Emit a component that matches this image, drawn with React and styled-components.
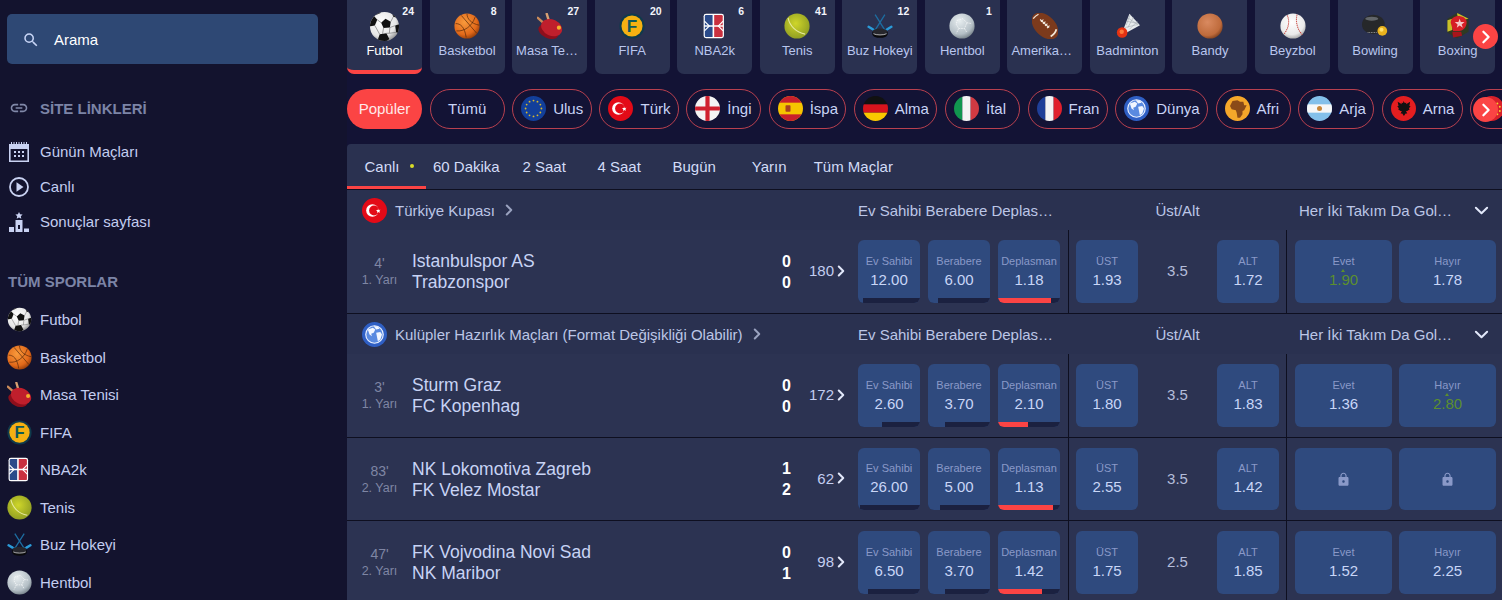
import styled, { createGlobalStyle } from "styled-components";
import { MdSearch, MdLink, MdLock } from "react-icons/md";

const GlobalStyle = createGlobalStyle`
  html, body {
    margin: 0;
    padding: 0;
    background: #13132e;
    font-family: "Liberation Sans", Arial, sans-serif;
  }
`;

const Page = styled.div`
  display: flex;
  width: 1502px;
  height: 600px;
  overflow: hidden;
  background: #13132e;
`;

const Sidebar = styled.aside`
  flex: 0 0 347px;
  display: flex;
  flex-direction: column;
`;

const Search = styled.div`
  flex: none;
  display: flex;
  align-items: center;
  gap: 14px;
  width: 311px;
  height: 50px;
  box-sizing: border-box;
  margin: 14px 0 0 7px;
  padding: 1px 0 0 15px;
  border-radius: 5px;
  background: #2e4874;
  color: #ffffff;
  font-size: 15px;
`;

const SectionTitle = styled.div`
  flex: none;
  display: flex;
  align-items: center;
  gap: 11px;
  padding-left: ${(p) => (p.$flush ? "8px" : "9px")};
  height: 20px;
  color: #7c84a6;
  font-size: 15px;
  font-weight: bold;
  margin-top: ${(p) => p.$top}px;
`;

const LinkList = styled.div`
  flex: none;
  display: flex;
  flex-direction: column;
  margin-top: 16px;
`;

const SideLink = styled.div`
  display: flex;
  align-items: center;
  gap: 11px;
  height: 35px;
  padding-left: 9px;
  color: #c3cdf0;
  font-size: 15px;
`;

const SportList = styled.div`
  flex: none;
  display: flex;
  flex-direction: column;
  margin-top: 10px;
`;

const SportLink = styled.div`
  display: flex;
  align-items: center;
  gap: 8px;
  height: 37.5px;
  flex: none;
  padding-left: 7px;
  color: #c3cdf0;
  font-size: 15px;
`;

const Main = styled.main`
  flex: 1;
  min-width: 0;
  display: flex;
  flex-direction: column;
  background: #131335;
  position: relative;
  overflow: hidden;
`;

const SportRow = styled.div`
  display: flex;
  gap: 7.55px;
  height: 74px;
  flex: none;
`;

const SportTab = styled.div`
  position: relative;
  flex: 0 0 75px;
  box-sizing: border-box;
  display: flex;
  flex-direction: column;
  align-items: center;
  height: 74px;
  padding-top: 13px;
  border-radius: 0 0 7px 7px;
  background: #2a3150;
  border-bottom: ${(p) => (p.$active ? "4px solid #fb4444" : "0")};
  color: ${(p) => (p.$active ? "#ffffff" : "#b9c6ee")};
  font-size: 13px;
`;

const SportIconBox = styled.div`
  display: flex;
  align-items: center;
  justify-content: center;
  height: 26px;
`;

const SportLabel = styled.div`
  width: 67px;
  margin-top: 4px;
  line-height: 16px;
  text-align: center;
  white-space: nowrap;
  overflow: hidden;
  text-overflow: ellipsis;
`;

const SportCount = styled.span`
  position: absolute;
  top: 5px;
  right: 8px;
  color: #f2f4fb;
  font-size: 10.5px;
  font-weight: bold;
  line-height: 12px;
`;

const NextButton = styled.div`
  position: absolute;
  right: 4px;
  top: ${(p) => p.$top}px;
  display: flex;
  align-items: center;
  justify-content: center;
  width: 25px;
  height: 25px;
  border-radius: 50%;
  background: #fb4444;
`;

const PillRow = styled.div`
  display: flex;
  gap: 7.6px;
  margin-top: 15px;
  height: 40px;
  flex: none;
`;

const Pill = styled.div`
  flex: none;
  box-sizing: border-box;
  display: flex;
  align-items: center;
  justify-content: ${(p) => (p.$plain ? "center" : "flex-start")};
  gap: 7px;
  width: ${(p) => p.$width}px;
  height: 40px;
  padding: ${(p) => (p.$plain ? "0 0 1px" : "0 8px 1px")};
  overflow: hidden;
  border-radius: 20px;
  border: ${(p) => (p.$active ? "0" : "1.5px solid #b9404f")};
  background: ${(p) => (p.$active ? "#fb4444" : "transparent")};
  color: ${(p) => (p.$active ? "#ffe9e9" : "#c9d4f5")};
  font-size: 15px;
  white-space: nowrap;
`;

const FlagSvg = styled.svg`
  flex: none;
  border-radius: 50%;
  display: block;
`;

const Board = styled.section`
  flex: none;
  margin-top: 15px;
  display: flex;
  flex-direction: column;
  border-radius: 4px 0 0 0;
  overflow: hidden;
  background: #2a3150;
`;

const TimeTabs = styled.div`
  display: flex;
  height: 45px;
  flex: none;
  border-bottom: 1px solid #0e0f20;
`;

const TimeTab = styled.div`
  box-sizing: border-box;
  display: flex;
  align-items: center;
  justify-content: center;
  gap: 10px;
  flex: none;
  width: ${(p) => (p.$active ? "79px" : "auto")};
  min-width: 75px;
  padding: 2px 7px 0 ${(p) => (p.$active ? "12px" : "7px")};
  color: #d3dcf7;
  font-size: 15px;
  border-bottom: ${(p) => (p.$active ? "3px solid #fb4444" : "3px solid transparent")};
`;

const LiveDot = styled.span`
  width: 4px;
  height: 4px;
  border-radius: 50%;
  background: #d8dc28;
`;

const LeagueHead = styled.div`
  display: flex;
  align-items: center;
  height: 40px;
  flex: none;
  background: #2a3150;
`;

const LeagueName = styled.div`
  flex: 1;
  display: flex;
  align-items: center;
  gap: 8px;
  padding-left: 15px;
  color: #bcc6e6;
  font-size: 15px;
`;

const MarketHeads = styled.div`
  flex: 0 0 644px;
  display: grid;
  grid-template-columns: 218px 223px 1fr;
  align-items: center;
  color: #bcc6e6;
  font-size: 15px;
`;

const MarketHead = styled.div`
  text-align: ${(p) => (p.$center ? "center" : "left")};
  white-space: nowrap;
  overflow: hidden;
  text-overflow: ellipsis;
  width: ${(p) => p.$width}px;
`;

const LastHead = styled.div`
  display: flex;
  align-items: center;
  justify-content: space-between;
  padding-right: 13px;
`;

const MatchRow = styled.div`
  display: flex;
  box-sizing: border-box;
  height: ${(p) => p.$height}px;
  flex: none;
  background: #2c3352;
  border-bottom: 1px solid #0e0f20;
`;

const TimeCol = styled.div`
  flex: 0 0 65px;
  box-sizing: border-box;
  display: flex;
  flex-direction: column;
  align-items: center;
  justify-content: center;
  gap: 2px;
  padding-top: 1px;
  color: #7f86a4;
  font-size: 14px;
  line-height: 15px;
`;

const HalfLabel = styled.span`
  font-size: 12.5px;
`;

const Teams = styled.div`
  flex: 1;
  display: flex;
  flex-direction: column;
  justify-content: center;
  padding-top: 1px;
  color: #c8d3f5;
  font-size: 17.5px;
  line-height: 21px;
`;

const Scores = styled.div`
  flex: 0 0 24px;
  display: flex;
  flex-direction: column;
  justify-content: center;
  color: #ffffff;
  font-size: 16px;
  font-weight: bold;
  line-height: 21px;
`;

const MoreCount = styled.div`
  flex: 0 0 52px;
  box-sizing: border-box;
  display: flex;
  align-items: center;
  justify-content: flex-end;
  gap: 1px;
  padding-right: 11px;
  padding-bottom: 2px;
  color: #c3cdf0;
  font-size: 15px;
`;

const Markets = styled.div`
  flex: 0 0 644px;
  display: flex;
`;

const MarketGroup = styled.div`
  flex: ${(p) => (p.$grow ? "1" : `0 0 ${p.$width}px`)};
  box-sizing: border-box;
  display: flex;
  gap: ${(p) => p.$gap || 8}px;
  padding: 10px ${(p) => p.$right}px 10px ${(p) => p.$left}px;
  border-right: ${(p) => (p.$grow ? "0" : "1px solid #0e0f20")};
`;

const OddButton = styled.div`
  position: relative;
  flex: ${(p) => (p.$wide ? "1" : "0 0 62px")};
  display: flex;
  flex-direction: column;
  align-items: center;
  justify-content: center;
  gap: 3px;
  overflow: hidden;
  border-radius: 6px;
  background: #2f4a7e;
`;

const OddLabel = styled.span`
  color: #8a99c8;
  font-size: 11px;
  line-height: 13px;
  white-space: nowrap;
`;

const OddValue = styled.span`
  position: relative;
  color: ${(p) => (p.$up ? "#5c8f2e" : "#c9d6f7")};
  font-size: 15px;
  line-height: 18px;
`;

const UpMark = styled.span`
  position: absolute;
  top: -2px;
  left: 50%;
  margin-left: -2px;
  border-left: 2px solid transparent;
  border-right: 2px solid transparent;
  border-bottom: 3px solid #5c8f2e;
`;

const ShareTrack = styled.div`
  position: absolute;
  left: 0;
  right: 0;
  bottom: 0;
  height: 5px;
  background: #1b2140;
`;

const ShareFill = styled.div`
  height: 100%;
  background: ${(p) => (p.$lead ? "#fb4444" : "#2f4a7e")};
`;

const LineValue = styled.div`
  flex: 1;
  display: flex;
  align-items: center;
  justify-content: center;
  padding-bottom: 2px;
  color: #b4bdda;
  font-size: 15px;
`;

function Chevron({ dir = "right", size = 14, color = "#c3cdf0", width = 2 }) {
  const d = dir === "right" ? "M5 2l6 6-6 6" : "M2 5l6 6 6-6";
  return (
    <svg width={size} height={size} viewBox="0 0 16 16" fill="none">
      <path d={d} stroke={color} strokeWidth={width * (16 / size)} strokeLinecap="round" strokeLinejoin="round" />
    </svg>
  );
}

const CalendarIcon = () => (
  <svg width="20" height="20" viewBox="0 0 20 20" fill="#c9d2f2">
    <path d="M0 2h20v18H0zm1.6 5v11.4h16.8V7z" fillRule="evenodd" />
    <path d="M2 0h1v2H2zM4.5 0h1v2h-1zM7 0h1v2H7zM9.5 0h1v2h-1zM12 0h1v2h-1zM14.5 0h1v2h-1zM17 0h1v2h-1z" />
    <path d="M5 9h2v2H5zM9 9h2v2H9zM13 9h2v2h-2zM5 13h2v2H5zM9 13h2v2H9zM13 13h2v2h-2z" />
  </svg>
);

const PlayIcon = () => (
  <svg width="20" height="20" viewBox="0 0 20 20">
    <circle cx="10" cy="10" r="9" fill="none" stroke="#c9d2f2" strokeWidth="1.8" />
    <path d="M7.5 5.2l7 4.8-7 4.8z" fill="#c9d2f2" />
  </svg>
);

const PodiumIcon = () => (
  <svg width="20" height="20" viewBox="0 0 20 20" fill="#c9d2f2">
    <path d="M10 0l1.1 2.3 2.5.3-1.8 1.7.5 2.5L10 5.6 7.700 6.800l.5-2.500L6.400 2.600l2.500-.3z" />
    <path d="M6.500 8h7v12h-7zM9 13v4h2v-4z" fillRule="evenodd" />
    <path d="M0 15h5v5H0zM15 16.500h5V20h-5z" />
  </svg>
);

function SportIcon({ kind, size = 25 }) {
  const common = { width: size, height: size, viewBox: "0 0 32 32", style: { display: "block", flex: "none" } };
  switch (kind) {
    case "football":
      return (
        <svg {...common}>
          <defs>
            <radialGradient id="ballWhite" cx="40%" cy="35%" r="70%">
              <stop offset="0" stopColor="#ffffff" />
              <stop offset="0.7" stopColor="#e6e6e6" />
              <stop offset="1" stopColor="#8e8e8e" />
            </radialGradient>
            <clipPath id="ballClip">
              <circle cx="16" cy="16" r="15" />
            </clipPath>
          </defs>
          <circle cx="16" cy="16" r="15" fill="url(#ballWhite)" />
          <g clipPath="url(#ballClip)" fill="#111">
            <polygon points="17,8 22.5,11 21.5,17 15,17.5 12.5,12" />
            <polygon points="0,9 5,5 8.5,9 6,15 0,16" />
            <polygon points="23,0 30,3 29,7 25,6" />
            <polygon points="27,15 33,13 33,24 28,22" />
            <polygon points="11,24 18,23 21,29 16,33 9,30" />
            <polygon points="6,1 12,-1 12,2 7,4" />
          </g>
          <g stroke="#777" strokeWidth="0.7" fill="none">
            <path d="M12.5 12L8.5 9M22.5 11L25 6M21.5 17l6 -2M15 17.5l-1 6M21 23l-3 0M21.5 17l-.5 6M28 22l-7 1M6 15l5 9" />
          </g>
        </svg>
      );
    case "basketball":
      return (
        <svg {...common}>
          <defs>
            <radialGradient id="ballOrange" cx="40%" cy="35%" r="70%">
              <stop offset="0" stopColor="#f89a3c" />
              <stop offset="0.7" stopColor="#e2691a" />
              <stop offset="1" stopColor="#8f3a08" />
            </radialGradient>
          </defs>
          <circle cx="16" cy="16" r="15.500" fill="url(#ballOrange)" />
          <g fill="none" stroke="#4a2208" strokeWidth="0.8">
            <path d="M9 3l19 22" />
            <path d="M3 22C12 23 22 17 26 5" />
            <path d="M2 13c6 0 11 4 13 17" />
            <path d="M16 1c0 6 5 12 15 14" />
          </g>
        </svg>
      );
    case "tabletennis":
      return (
        <svg {...common}>
          <path d="M1 6l9 8" stroke="#c98a5a" strokeWidth="3" strokeLinecap="round" />
          <path d="M12 1l3 10" stroke="#d8a072" strokeWidth="3" strokeLinecap="round" />
          <ellipse cx="14" cy="23" rx="13" ry="8" fill="#8d0f1c" transform="rotate(25 14 23)" />
          <ellipse cx="18" cy="18" rx="13.500" ry="10" fill="#c01f2c" transform="rotate(25 18 18)" />
          <circle cx="27" cy="18" r="2.600" fill="#f3b02c" />
        </svg>
      );
    case "fifa":
      return (
        <svg {...common}>
          <circle cx="16" cy="16" r="15.500" fill="#0f3a4c" />
          <circle cx="16" cy="16" r="13" fill="#f5b112" />
          <text x="16" y="23" textAnchor="middle" fontFamily="Liberation Sans, sans-serif" fontWeight="bold" fontSize="21" fill="#0f5a5a">
            F
          </text>
        </svg>
      );
    case "nba":
      return (
        <svg {...common}>
          <rect x="2" y="1" width="25" height="30" rx="3" fill="#fff" />
          <path d="M3.500 4a1.500 1.500 0 011.500-1.500h8V15H3.500z" fill="#2a4a8a" />
          <path d="M3.500 17H13v12.500H5A1.500 1.500 0 013.500 28z" fill="#2a4a8a" />
          <path d="M15 2.500h9A1.500 1.500 0 0125.500 4v11H15z" fill="#c9303f" />
          <path d="M15 17h10.500v11a1.500 1.500 0 01-1.500 1.500h-9z" fill="#c9303f" />
          <path d="M3 10l6 6-6 6M26 10l-6 6 6 6" fill="none" stroke="#fff" strokeWidth="1.400" />
        </svg>
      );
    case "tennis":
      return (
        <svg {...common}>
          <defs>
            <radialGradient id="ballTennis" cx="45%" cy="40%" r="65%">
              <stop offset="0" stopColor="#cfd62a" />
              <stop offset="1" stopColor="#8c9a22" />
            </radialGradient>
          </defs>
          <circle cx="16" cy="16" r="15.500" fill="url(#ballTennis)" />
          <path d="M5 6c2 10 10 18 21 20" fill="none" stroke="#e6e9a0" strokeWidth="1.300" />
        </svg>
      );
    case "hockey":
      return (
        <svg {...common}>
          <path d="M10 2l12 19 6-3M22 2L10 21l-6-3" fill="none" stroke="#1d6da0" strokeWidth="1.600" />
          <path d="M2 17l5 3M30 17l-5 3" stroke="#2b9bd8" strokeWidth="3" strokeLinecap="round" />
          <ellipse cx="16" cy="27" rx="9" ry="3.500" fill="#0a0a0c" />
          <ellipse cx="16" cy="23" rx="9" ry="4" fill="#26262c" />
          <path d="M7 23v4M25 23v4" stroke="#0a0a0c" />
          <path d="M8 25.500c3 2 13 2 16 0" fill="none" stroke="#e8e8e8" strokeWidth="0.9" />
        </svg>
      );
    case "handball":
      return (
        <svg {...common}>
          <defs>
            <radialGradient id="ballGrey" cx="40%" cy="30%" r="75%">
              <stop offset="0" stopColor="#e8eef0" />
              <stop offset="0.7" stopColor="#b4bfc6" />
              <stop offset="1" stopColor="#6e7a82" />
            </radialGradient>
          </defs>
          <circle cx="16" cy="16" r="15.500" fill="url(#ballGrey)" />
          <path d="M10 9l7-2 5 5-3 7-7 0-3-5zM22 12l6 1M12 19l-3 6M19 19l3 5" fill="none" stroke="#fff" strokeWidth="0.8" strokeDasharray="2 1" />
        </svg>
      );
    case "american":
      return (
        <svg {...common}>
          <ellipse cx="16" cy="16" rx="19.500" ry="12.500" fill="#7c3a1c" transform="rotate(45 16 16)" />
          <path d="M23 29C26 27 29 24 30 20" fill="none" stroke="#f2e6d6" strokeWidth="2.200" />
          <path d="M1.500 7C3 5 5 3 8 1.500" fill="none" stroke="#f2e6d6" strokeWidth="1.600" />
          <path d="M10 8l11 10" stroke="#f5efe6" strokeWidth="1.300" />
          <path d="M11 11l3-3M13.500 13.500l3-3M16 16l3-3M18.500 18.500l3-3" stroke="#f5efe6" strokeWidth="1.300" />
        </svg>
      );
    case "badminton":
      return (
        <svg {...common}>
          <path d="M12 19L19 1l13 14-18 10z" fill="#e8ecee" />
          <path d="M15 15L20 2M17 18L24 5M19 20L29 10M15 10l15 3M17 6l12 8M13 18l17-4" stroke="#9aa2a8" strokeWidth="0.6" fill="none" />
          <circle cx="10" cy="24" r="6.500" fill="#e53212" />
          <circle cx="9.500" cy="23" r="2.700" fill="#ff7a3a" />
        </svg>
      );
    case "bandy":
      return (
        <svg {...common}>
          <defs>
            <radialGradient id="ballBandy" cx="40%" cy="35%" r="70%">
              <stop offset="0" stopColor="#d98a60" />
              <stop offset="0.75" stopColor="#bf6b3c" />
              <stop offset="1" stopColor="#7a3d1c" />
            </radialGradient>
          </defs>
          <circle cx="16" cy="16" r="15.500" fill="url(#ballBandy)" />
        </svg>
      );
    case "baseball":
      return (
        <svg {...common}>
          <defs>
            <radialGradient id="ballBase" cx="45%" cy="35%" r="70%">
              <stop offset="0" stopColor="#ffffff" />
              <stop offset="0.7" stopColor="#eaeaea" />
              <stop offset="1" stopColor="#9a9a9a" />
            </radialGradient>
          </defs>
          <circle cx="16" cy="16" r="15.500" fill="url(#ballBase)" />
          <path d="M9 3c3 7 2 15-4 23M21 2c-2 8 0 19 7 25" fill="none" stroke="#c8433c" strokeWidth="1.300" strokeDasharray="1.500 1" />
        </svg>
      );
    case "bowling":
      return (
        <svg {...common}>
          <ellipse cx="14" cy="14" rx="14" ry="12" fill="#26282a" />
          <ellipse cx="12" cy="7" rx="8" ry="2.500" fill="#62666a" />
          <path d="M7 24h12" stroke="#b8b8b8" strokeWidth="1" strokeDasharray="1 1" />
          <circle cx="25" cy="22" r="6" fill="#e9b21e" />
          <circle cx="24" cy="20.500" r="2.500" fill="#ffe06a" />
        </svg>
      );
    default:
      return (
        <svg {...common}>
          <polygon points="15,0 29,7 29,23 15,31 3,24 3,7" fill="#2f3a22" />
          <path d="M3 9l6-2v14l-6 2z" fill="#c9c02a" />
          <path d="M15 0l14 7-4 1-10-5z" fill="#c9c02a" />
          <path d="M7 12c0-6 6-9 12-8s9 5 7 11-7 7-9 7H10z" fill="#d61f26" />
          <path d="M9 23h11l1 5-11 2z" fill="#a8141c" />
          <polygon points="18,7 19.500,11 24,11 20.500,14 22,18 18,15.500 14.500,18 15.500,14 12,11 16.500,11" fill="#f6c7c7" />
        </svg>
      );
  }
}

function Flag({ kind, size = 25 }) {
  const props = { width: size, height: size, viewBox: "0 0 30 30" };
  switch (kind) {
    case "eu":
      return (
        <FlagSvg {...props}>
          <rect width="30" height="30" fill="#123f9a" />
          {Array.from({ length: 12 }).map((_, i) => {
            const a = (i / 12) * Math.PI * 2;
            return <circle key={i} cx={15 + Math.cos(a) * 9.5} cy={15 + Math.sin(a) * 9.5} r="1.100" fill="#d9b92a" />;
          })}
        </FlagSvg>
      );
    case "tr":
      return (
        <FlagSvg {...props}>
          <rect width="30" height="30" fill="#e30a17" />
          <circle cx="12.500" cy="15" r="7.500" fill="#fff" />
          <circle cx="14.500" cy="15" r="6" fill="#e30a17" />
          <polygon points="19,12.500 20,14.300 22.200,14.200 20.800,15.700 21.800,17.700 19.700,16.800 18,18 18.300,15.900 16.800,14.500 19,14.300" fill="#fff" />
        </FlagSvg>
      );
    case "en":
      return (
        <FlagSvg {...props}>
          <rect width="30" height="30" fill="#f4f4f4" />
          <path d="M12.500 0h5v30h-5zM0 12.500h30v5H0z" fill="#d0202e" />
        </FlagSvg>
      );
    case "es":
      return (
        <FlagSvg {...props}>
          <rect width="30" height="30" fill="#f6c500" />
          <rect width="30" height="8" fill="#c8202c" />
          <rect y="22" width="30" height="8" fill="#c8202c" />
          <rect x="9" y="11" width="6" height="8" rx="1" fill="#a9411f" />
        </FlagSvg>
      );
    case "de":
      return (
        <FlagSvg {...props}>
          <rect width="30" height="10" fill="#111" />
          <rect y="10" width="30" height="10" fill="#d8141c" />
          <rect y="20" width="30" height="10" fill="#f9c800" />
        </FlagSvg>
      );
    case "it":
      return (
        <FlagSvg {...props}>
          <rect width="10" height="30" fill="#11964f" />
          <rect x="10" width="10" height="30" fill="#f4f4f4" />
          <rect x="20" width="10" height="30" fill="#d13a42" />
        </FlagSvg>
      );
    case "fr":
      return (
        <FlagSvg {...props}>
          <rect width="10" height="30" fill="#1f3f98" />
          <rect x="10" width="10" height="30" fill="#f4f4f4" />
          <rect x="20" width="10" height="30" fill="#e0202c" />
        </FlagSvg>
      );
    case "world":
      return (
        <FlagSvg {...props}>
          <rect width="30" height="30" fill="#2f5fc4" />
          <circle cx="15" cy="15" r="10.500" fill="#5a8ae0" stroke="#eaf0ff" strokeWidth="1.400" />
          <path d="M7 9l6-2 3 2-2 4-3 1 1 3-3-2zM17 13l5-1 2 3-2 6-3 2-1-5zM14 5l5 0 2 3-4 1z" fill="#f2f6ff" />
        </FlagSvg>
      );
    case "af":
      return (
        <FlagSvg {...props}>
          <rect width="30" height="30" fill="#f5a72a" />
          <path d="M9 6l6-1 3 2 4 0 1 4 3 0-3 6-2 1 0 4-3 4-3 0-1-6-1-3-5-1-2-4z" fill="#8a4a18" />
        </FlagSvg>
      );
    case "ar":
      return (
        <FlagSvg {...props}>
          <rect width="30" height="30" fill="#84c0ea" />
          <rect y="10" width="30" height="10" fill="#f7f7f7" />
          <circle cx="15" cy="15" r="3" fill="#c8873a" />
        </FlagSvg>
      );
    case "al":
      return (
        <FlagSvg {...props}>
          <rect width="30" height="30" fill="#e41e20" />
          <path d="M15 6l1.500 2.500 2-.5-.5 2 5-3-1 5 1.500 0-2 3 1 1-3 2-1.500 0 1.500 3-2 0-2 3-2-3-2 0 1.500-3-1.500 0-3-2 1-1-2-3 1.500 0-1-5 5 3-.5-2 2 .5z" fill="#111" />
        </FlagSvg>
      );
    default:
      return (
        <FlagSvg {...props}>
          <rect width="30" height="30" fill="#d8202a" />
          <circle cx="22" cy="9" r="1.200" fill="#f7d02a" />
          <circle cx="25" cy="13" r="1.200" fill="#f7d02a" />
          <circle cx="25" cy="18" r="1.200" fill="#f7d02a" />
          <circle cx="22" cy="22" r="1.200" fill="#f7d02a" />
        </FlagSvg>
      );
  }
}

const SPORTS = [
  { name: "Futbol", kind: "football", count: 24 },
  { name: "Basketbol", kind: "basketball", count: 8 },
  { name: "Masa Tenisi", kind: "tabletennis", count: 27 },
  { name: "FIFA", kind: "fifa", count: 20 },
  { name: "NBA2k", kind: "nba", count: 6 },
  { name: "Tenis", kind: "tennis", count: 41 },
  { name: "Buz Hokeyi", kind: "hockey", count: 12 },
  { name: "Hentbol", kind: "handball", count: 1 },
  { name: "Amerikan Futbolu", kind: "american" },
  { name: "Badminton", kind: "badminton" },
  { name: "Bandy", kind: "bandy" },
  { name: "Beyzbol", kind: "baseball" },
  { name: "Bowling", kind: "bowling" },
  { name: "Boxing", kind: "boxing" },
];

const COUNTRIES = [
  { name: "Ulus", flag: "eu", width: 79.7 },
  { name: "Türk", flag: "tr", width: 79.3 },
  { name: "İngi", flag: "en", width: 74.7 },
  { name: "İspa", flag: "es", width: 77.5 },
  { name: "Alma", flag: "de", width: 83.7 },
  { name: "İtal", flag: "it", width: 75 },
  { name: "Fran", flag: "fr", width: 80 },
  { name: "Dünya", flag: "world", width: 92.8 },
  { name: "Afri", flag: "af", width: 75 },
  { name: "Arja", flag: "ar", width: 76 },
  { name: "Arna", flag: "al", width: 81 },
  { name: "Çin", flag: "cn", width: 75 },
];

const TIME_TABS = ["60 Dakika", "2 Saat", "4 Saat", "Bugün", "Yarın", "Tüm Maçlar"];

const LEAGUES = [
  {
    name: "Türkiye Kupası",
    flag: "tr",
    matches: [
      {
        minute: "4'",
        half: "1. Yarı",
        home: "Istanbulspor AS",
        away: "Trabzonspor",
        score: [0, 0],
        more: 180,
        result: ["12.00", "6.00", "1.18"],
        line: ["1.93", "3.5", "1.72"],
        both: ["1.90", "1.78"],
        upIndex: 0,
        height: 84,
      },
    ],
  },
  {
    name: "Kulüpler Hazırlık Maçları (Format Değişikliği Olabilir)",
    flag: "world",
    matches: [
      {
        minute: "3'",
        half: "1. Yarı",
        home: "Sturm Graz",
        away: "FC Kopenhag",
        score: [0, 0],
        more: 172,
        result: ["2.60", "3.70", "2.10"],
        line: ["1.80", "3.5", "1.83"],
        both: ["1.36", "2.80"],
        upIndex: 1,
        height: 84,
      },
      {
        minute: "83'",
        half: "2. Yarı",
        home: "NK Lokomotiva Zagreb",
        away: "FK Velez Mostar",
        score: [1, 2],
        more: 62,
        result: ["26.00", "5.00", "1.13"],
        line: ["2.55", "3.5", "1.42"],
        both: null,
        height: 83,
      },
      {
        minute: "47'",
        half: "2. Yarı",
        home: "FK Vojvodina Novi Sad",
        away: "NK Maribor",
        score: [0, 1],
        more: 98,
        result: ["6.50", "3.70", "1.42"],
        line: ["1.75", "2.5", "1.85"],
        both: ["1.52", "2.25"],
        height: 84,
      },
    ],
  },
];

const RESULT_LABELS = ["Ev Sahibi", "Berabere", "Deplasman"];
const BOTH_LABELS = ["Evet", "Hayır"];

function Match({ match }) {
  const lowest = Math.min(...match.result.map(Number));
  return (
    <MatchRow $height={match.height}>
      <TimeCol>
        <span>{match.minute}</span>
        <HalfLabel>{match.half}</HalfLabel>
      </TimeCol>
      <Teams>
        <span>{match.home}</span>
        <span>{match.away}</span>
      </Teams>
      <Scores>
        <span>{match.score[0]}</span>
        <span>{match.score[1]}</span>
      </Scores>
      <MoreCount>
        {match.more}
        <Chevron size={12} color="#e2e8fa" />
      </MoreCount>
      <Markets>
        <MarketGroup $width={211} $left={0} $right={8}>
          {match.result.map((odd, i) => (
            <OddButton key={RESULT_LABELS[i]}>
              <OddLabel>{RESULT_LABELS[i]}</OddLabel>
              <OddValue>{odd}</OddValue>
              <ShareTrack>
                <ShareFill $lead={Number(odd) === lowest} style={{ width: `${100 / Number(odd)}%` }} />
              </ShareTrack>
            </OddButton>
          ))}
        </MarketGroup>
        <MarketGroup $width={218} $left={7} $right={7} $gap={1}>
          <OddButton>
            <OddLabel>ÜST</OddLabel>
            <OddValue>{match.line[0]}</OddValue>
          </OddButton>
          <LineValue>{match.line[1]}</LineValue>
          <OddButton>
            <OddLabel>ALT</OddLabel>
            <OddValue>{match.line[2]}</OddValue>
          </OddButton>
        </MarketGroup>
        <MarketGroup $grow $left={8} $right={6} $gap={7}>
          {BOTH_LABELS.map((label, i) => (
            <OddButton $wide key={label}>
              {match.both ? (
                <>
                  <OddLabel>{label}</OddLabel>
                  <OddValue $up={match.upIndex === i}>
                    {match.upIndex === i && <UpMark />}
                    {match.both[i]}
                  </OddValue>
                </>
              ) : (
                <MdLock size={15} color="#8a99c8" />
              )}
            </OddButton>
          ))}
        </MarketGroup>
      </Markets>
    </MatchRow>
  );
}

export default function App() {
  return (
    <Page>
      <GlobalStyle />
      <Sidebar>
        <Search>
          <MdSearch size={18} color="#c9d6f7" />
          <span>Arama</span>
        </Search>
        <SectionTitle $top={34}>
          <MdLink size={20} color="#8088a8" />
          <span>SİTE LİNKLERİ</span>
        </SectionTitle>
        <LinkList>
          <SideLink>
            <CalendarIcon />
            Günün Maçları
          </SideLink>
          <SideLink>
            <PlayIcon />
            Canlı
          </SideLink>
          <SideLink>
            <PodiumIcon />
            Sonuçlar sayfası
          </SideLink>
        </LinkList>
        <SectionTitle $flush $top={32}>
          TÜM SPORLAR
        </SectionTitle>
        <SportList>
          {SPORTS.slice(0, 8).map((sport) => (
            <SportLink key={sport.name}>
              <SportIcon kind={sport.kind} />
              {sport.name}
            </SportLink>
          ))}
        </SportList>
      </Sidebar>
      <Main>
        <SportRow>
          {SPORTS.map((sport, i) => (
            <SportTab key={sport.name} $active={i === 0}>
              {sport.count && <SportCount>{sport.count}</SportCount>}
              <SportIconBox>
                <SportIcon kind={sport.kind} size={i === 0 ? 31 : 26} />
              </SportIconBox>
              <SportLabel>{sport.name}</SportLabel>
            </SportTab>
          ))}
        </SportRow>
        <NextButton $top={24}>
          <Chevron size={14} color="#ffffff" width={2.2} />
        </NextButton>
        <PillRow>
          <Pill $active $plain $width={75}>
            Popüler
          </Pill>
          <Pill $plain $width={75}>
            Tümü
          </Pill>
          {COUNTRIES.map((country) => (
            <Pill key={country.name} $width={country.width}>
              <Flag kind={country.flag} />
              {country.name}
            </Pill>
          ))}
        </PillRow>
        <NextButton $top={97}>
          <Chevron size={14} color="#ffffff" width={2.2} />
        </NextButton>
        <Board>
          <TimeTabs>
            <TimeTab $active>
              Canlı
              <LiveDot />
            </TimeTab>
            {TIME_TABS.map((tab) => (
              <TimeTab key={tab}>{tab}</TimeTab>
            ))}
          </TimeTabs>
          {LEAGUES.map((league) => (
            <div key={league.name}>
              <LeagueHead>
                <LeagueName>
                  <Flag kind={league.flag} />
                  <span>{league.name}</span>
                  <Chevron size={12} color="#9aa2bf" />
                </LeagueName>
                <MarketHeads>
                  <MarketHead $width={198}>Ev Sahibi Berabere Deplasman</MarketHead>
                  <MarketHead $center $width={203}>
                    Üst/Alt
                  </MarketHead>
                  <LastHead>
                    <MarketHead $width={156}>Her İki Takım Da Gol Atar</MarketHead>
                    <Chevron dir="down" size={15} color="#e2e8fa" />
                  </LastHead>
                </MarketHeads>
              </LeagueHead>
              {league.matches.map((match) => (
                <Match key={match.home} match={match} />
              ))}
            </div>
          ))}
        </Board>
      </Main>
    </Page>
  );
}
